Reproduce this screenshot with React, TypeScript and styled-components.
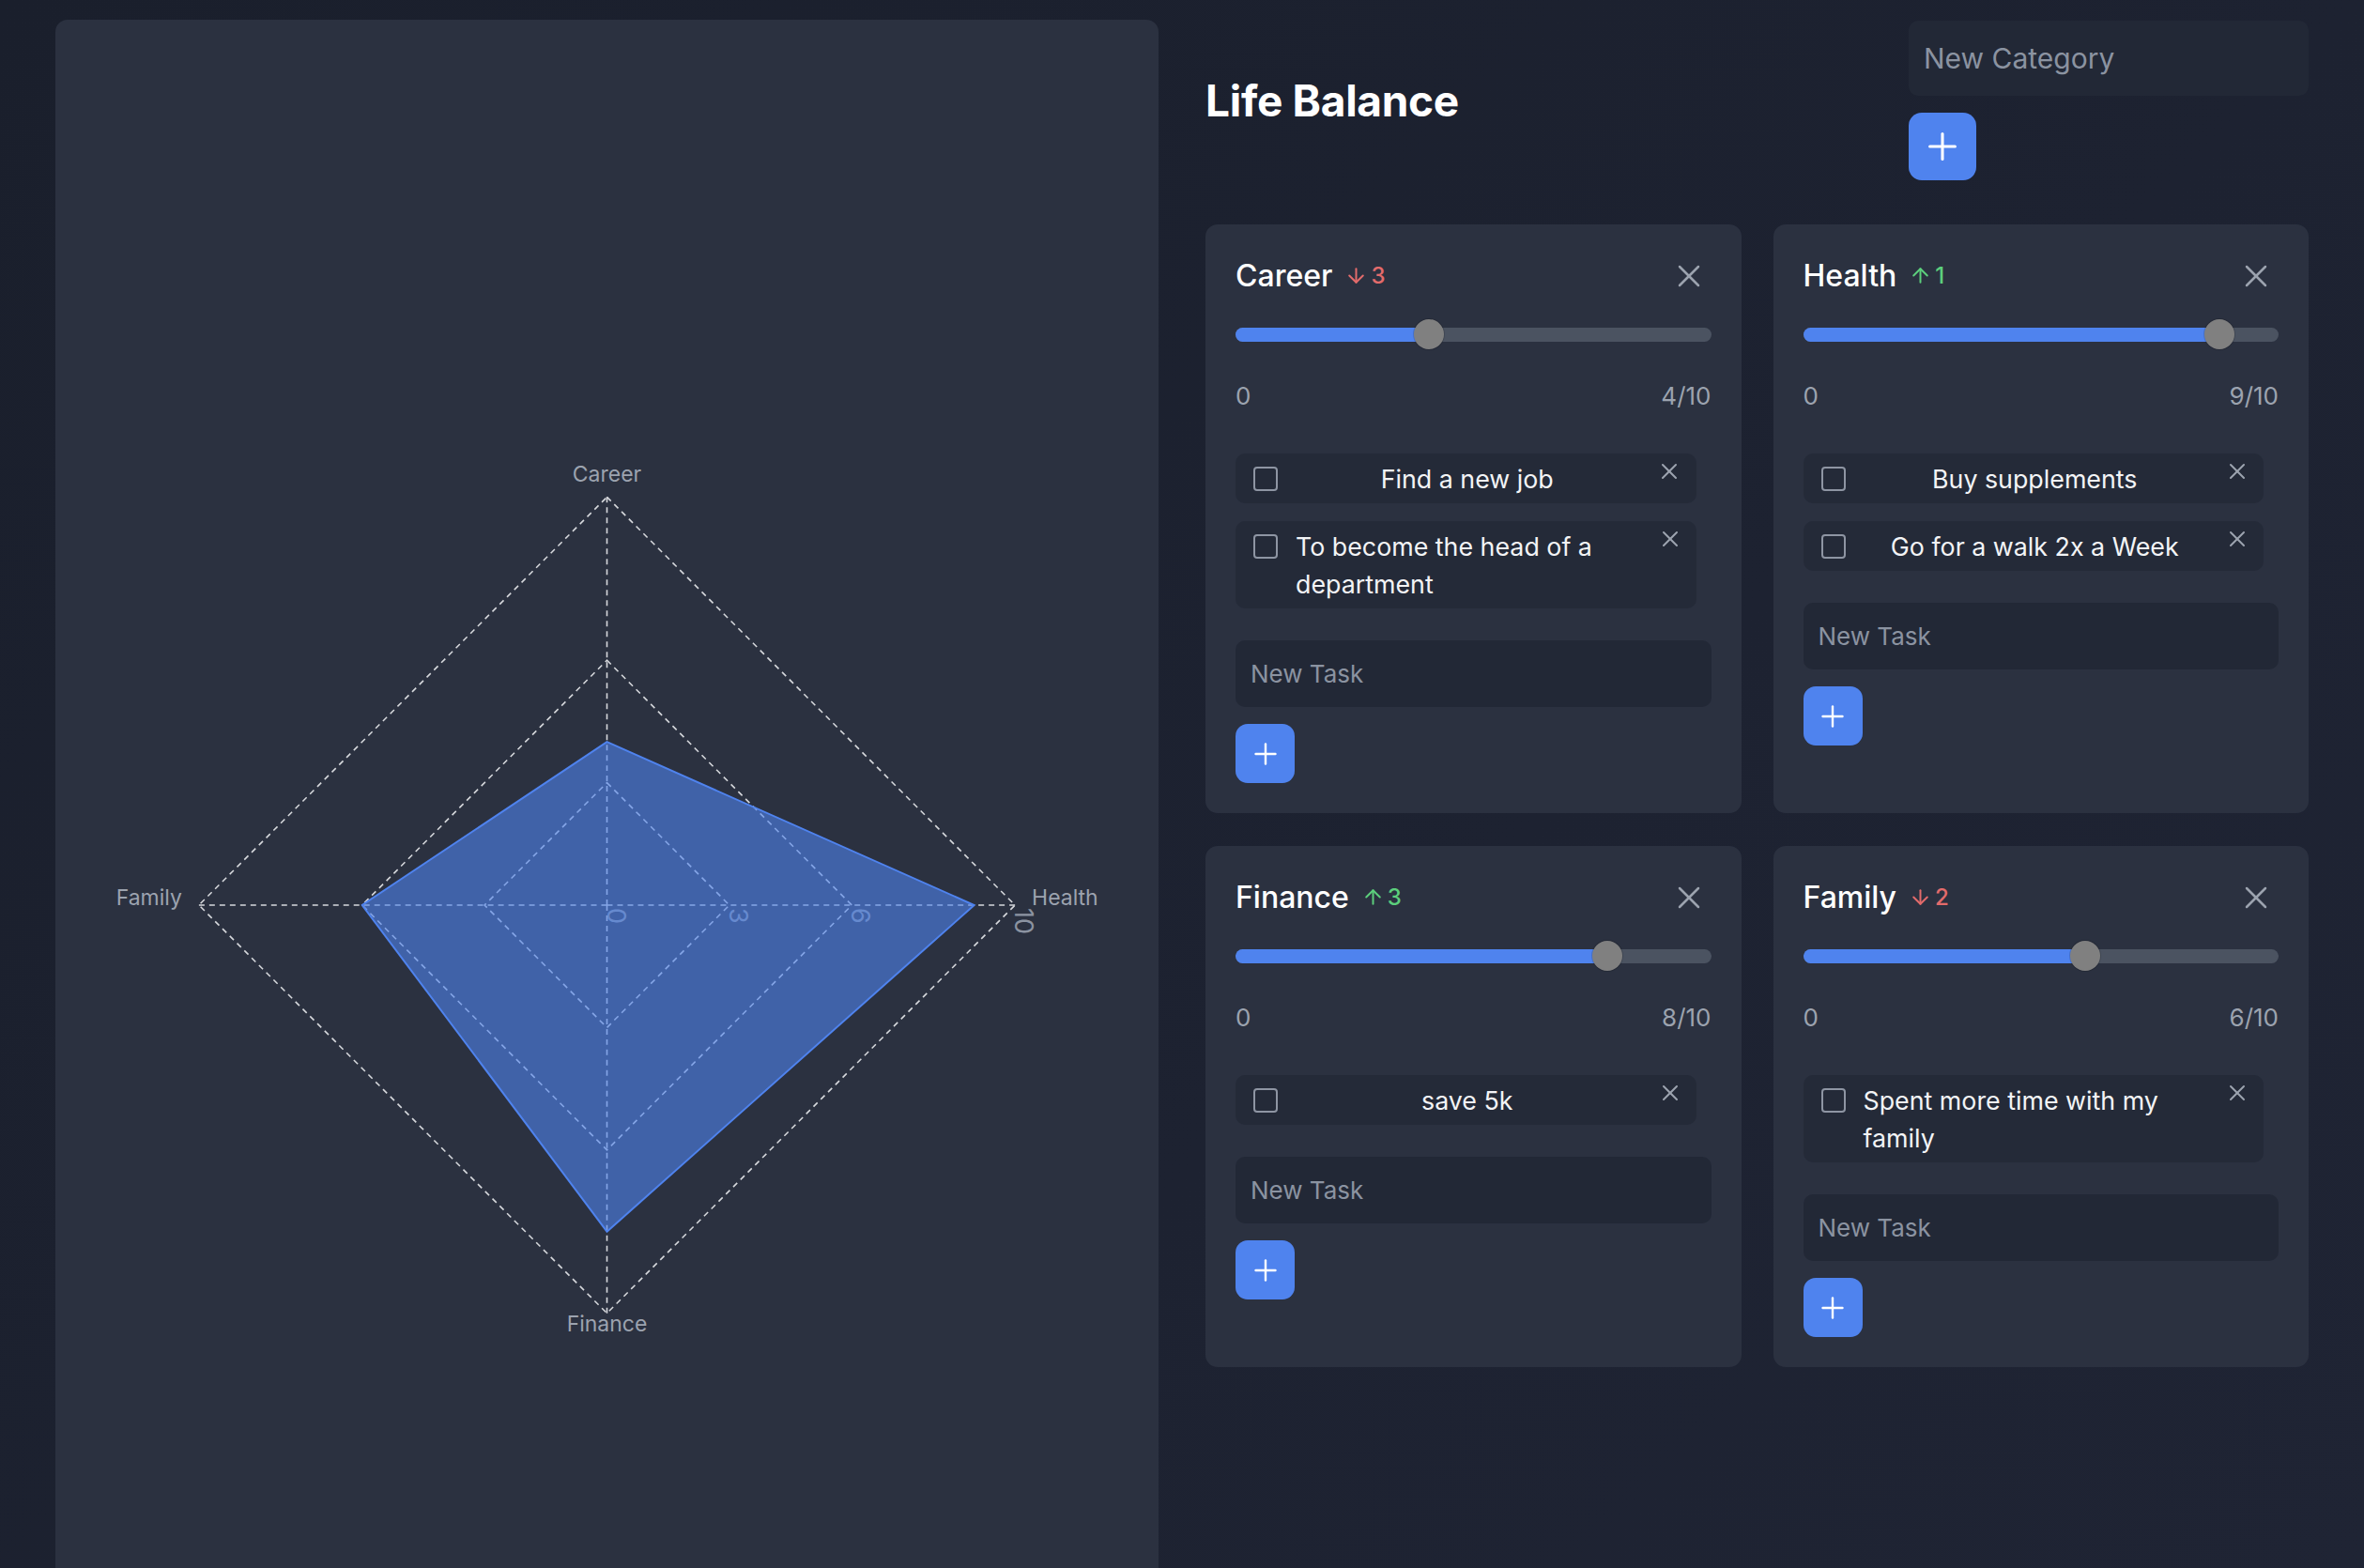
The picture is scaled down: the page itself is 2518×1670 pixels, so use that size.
import React from "react";
import styled, { createGlobalStyle } from "styled-components";
import { ArrowDown, ArrowUp, Plus, X } from "lucide-react";

type Category = {
  name: string;
  value: number;
  trend: number;
  tasks: string[];
};

const categories: Category[] = [
  {
    name: "Career",
    value: 4,
    trend: -3,
    tasks: ["Find a new job", "To become the head of a department"],
  },
  {
    name: "Health",
    value: 9,
    trend: 1,
    tasks: ["Buy supplements", "Go for a walk 2x a Week"],
  },
  { name: "Finance", value: 8, trend: 3, tasks: ["save 5k"] },
  {
    name: "Family",
    value: 6,
    trend: -2,
    tasks: ["Spent more time with my family"],
  },
];

const GlobalStyle = createGlobalStyle`
  html, body {
    margin: 0;
    padding: 0;
    background: #1c2130;
    font-family: Inter, "Noto Sans", "Liberation Sans", sans-serif;
    color: #f3f4f6;
  }
  * {
    box-sizing: border-box;
  }
`;

const Page = styled.div`
  display: grid;
  grid-template-columns: 1fr 1fr;
  gap: 50px;
  height: 100vh;
  padding: 21px 59px 0;
  overflow: hidden;
  background: linear-gradient(135deg, #1a1f2c 0%, #1d2231 60%, #1f2434 100%);
`;

const ChartPanel = styled.section`
  min-height: 1700px;
  background: #2b3140;
  border-radius: 13px;
  padding-top: 443px;
`;

const ChartSvg = styled.svg`
  display: block;
  width: 100%;
  height: 1000px;
`;

const AxisLabel = styled.text`
  fill: #9ca3af;
  font-size: 23px;
  font-family: Inter, "Liberation Sans", sans-serif;
`;

const TickLabel = styled.text`
  fill: #8b93a1;
  font-size: 27px;
  font-family: Inter, "Liberation Sans", sans-serif;
`;

const Main = styled.main`
  display: flex;
  flex-direction: column;
  align-self: start;
`;

const Header = styled.header`
  display: flex;
  align-items: center;
  justify-content: space-between;
  padding-top: 1px;
  margin-bottom: 47px;
`;

const Title = styled.h1`
  margin: 0;
  font-size: 46px;
  font-weight: 700;
  color: #ffffff;
  letter-spacing: -0.3px;
`;

const CategoryForm = styled.div`
  width: 426px;
  display: flex;
  flex-direction: column;
  align-items: flex-start;
  gap: 18px;
`;

const TextInput = styled.input<{ $big?: boolean }>`
  width: 100%;
  height: ${(p) => (p.$big ? "80px" : "71px")};
  padding: 0 16px;
  border: none;
  outline: none;
  border-radius: 10px;
  background: #222836;
  color: #f3f4f6;
  font-family: inherit;
  font-size: ${(p) => (p.$big ? "30px" : "26px")};

  &::placeholder {
    color: #8b93a1;
  }
`;

const AddButton = styled.button<{ $big?: boolean }>`
  width: ${(p) => (p.$big ? "72px" : "63px")};
  height: ${(p) => (p.$big ? "72px" : "63px")};
  display: flex;
  align-items: center;
  justify-content: center;
  padding: 0;
  border: none;
  border-radius: ${(p) => (p.$big ? "14px" : "13px")};
  background: #4f83ee;
  color: #ffffff;
  cursor: pointer;
`;

const CardGrid = styled.div`
  display: grid;
  grid-template-columns: 1fr 1fr;
  gap: 35px 34px;
`;

const Card = styled.div`
  display: flex;
  flex-direction: column;
  padding: 32px;
  background: #2b3140;
  border-radius: 13px;
`;

const CardHeader = styled.div`
  display: flex;
  align-items: center;
  justify-content: space-between;
  height: 45px;
  margin-bottom: 24px;
`;

const TitleGroup = styled.div`
  display: flex;
  align-items: center;
`;

const CardTitle = styled.h2`
  margin: 0;
  font-size: 32px;
  font-weight: 500;
  line-height: 45px;
  color: #ffffff;
`;

const Trend = styled.span<{ $up: boolean }>`
  display: flex;
  align-items: center;
  gap: 3px;
  margin-left: 13px;
  font-size: 24px;
  font-weight: 500;
  color: ${(p) => (p.$up ? "#5ccf7c" : "#e36b6b")};
`;

const IconButton = styled.button<{ $small?: boolean }>`
  display: flex;
  align-items: center;
  justify-content: center;
  flex-shrink: 0;
  width: ${(p) => (p.$small ? "28px" : "48px")};
  height: ${(p) => (p.$small ? "28px" : "45px")};
  margin-top: ${(p) => (p.$small ? "-2px" : "0")};
  padding: 0;
  border: none;
  background: transparent;
  color: #9ca3af;
  cursor: pointer;
`;

const Slider = styled.div`
  position: relative;
  height: 32px;
  display: flex;
  align-items: center;
`;

const Track = styled.div`
  position: relative;
  width: 100%;
  height: 15px;
  border-radius: 8px;
  background: #4b5361;
  overflow: hidden;
`;

const Fill = styled.div`
  height: 100%;
  background: #4f83ee;
`;

const Thumb = styled.div`
  position: absolute;
  top: 0;
  width: 32px;
  height: 32px;
  border-radius: 50%;
  background: #808080;
  box-shadow: 0 0 0 1px rgba(0, 0, 0, 0.15);
`;

const Scale = styled.div`
  display: flex;
  justify-content: space-between;
  margin-top: 31px;
  font-size: 26px;
  line-height: 38px;
  color: #9ca3af;
`;

const TaskList = styled.ul`
  display: flex;
  flex-direction: column;
  gap: 19px;
  margin: 42px 16px 0 0;
  padding: 0;
  list-style: none;
`;

const TaskItem = styled.li`
  display: flex;
  align-items: flex-start;
  justify-content: space-between;
  gap: 19px;
  padding: 6.5px 14px 6.5px 19px;
  background: #242a38;
  border-radius: 10px;
`;

const Checkbox = styled.input`
  appearance: none;
  flex-shrink: 0;
  width: 26px;
  height: 26px;
  margin: 7px 0 0;
  border: 2.5px solid #8e95a3;
  border-radius: 4px;
  background: transparent;
`;

const TaskText = styled.span`
  font-size: 26.8px;
  line-height: 40px;
  color: #f3f4f6;
`;

const NewTaskForm = styled.div`
  display: flex;
  flex-direction: column;
  align-items: flex-start;
  gap: 18px;
  margin-top: 34px;
`;

const CX = 588;
const CY = 500;
const R = 435;

function pt(i: number, n: number, ratio: number): [number, number] {
  const a = -Math.PI / 2 + (i * 2 * Math.PI) / n;
  return [CX + R * ratio * Math.cos(a), CY + R * ratio * Math.sin(a)];
}

function poly(n: number, ratio: (i: number) => number) {
  return Array.from({ length: n }, (_, i) => pt(i, n, ratio(i)).join(",")).join(" ");
}

const labelPlacement = [
  { dx: 0, dy: -16, anchor: "middle" },
  { dx: 18, dy: 0, anchor: "start" },
  { dx: 0, dy: 19, anchor: "middle" },
  { dx: -18, dy: 0, anchor: "end" },
];

const RadarChart: React.FC<{ data: Category[] }> = ({ data }) => {
  const n = data.length;
  return (
    <ChartSvg viewBox="0 0 1176 1000">
      <g stroke="#d6d8dc" strokeWidth={1.6} strokeDasharray="6 5" fill="none">
        {[0.3, 0.6, 1].map((r) => (
          <polygon key={r} points={poly(n, () => r)} />
        ))}
        {data.map((_, i) => {
          const [x, y] = pt(i, n, 1);
          return <line key={i} x1={CX} y1={CY} x2={x} y2={y} />;
        })}
      </g>
      {[0, 3, 6, 10].map((t) => {
        const x = CX + (R * t) / 10;
        return (
          <TickLabel key={t} x={x} y={CY + 3} transform={`rotate(90 ${x} ${CY + 3})`}>
            {t}
          </TickLabel>
        );
      })}
      <polygon
        points={poly(n, (i) => data[i].value / 10)}
        fill="#4f83ee"
        fillOpacity={0.6}
        stroke="#4f83ee"
        strokeWidth={2}
      />
      {data.map((c, i) => {
        const [x, y] = pt(i, n, 1);
        const p = labelPlacement[i % 4];
        return (
          <AxisLabel key={c.name} x={x + p.dx} y={y + p.dy} textAnchor={p.anchor as "middle"}>
            {c.name}
          </AxisLabel>
        );
      })}
    </ChartSvg>
  );
};

const CategoryCard: React.FC<{ category: Category }> = ({ category }) => {
  const ratio = category.value / 10;
  const up = category.trend > 0;
  return (
    <Card>
      <CardHeader>
        <TitleGroup>
          <CardTitle>{category.name}</CardTitle>
          <Trend $up={up}>
            {up ? <ArrowUp size={25} strokeWidth={1.9} /> : <ArrowDown size={25} strokeWidth={1.9} />}
            {Math.abs(category.trend)}
          </Trend>
        </TitleGroup>
        <IconButton aria-label="Delete category">
          <X size={40} strokeWidth={1.5} />
        </IconButton>
      </CardHeader>
      <Slider>
        <Track>
          <Fill style={{ width: `calc(16px + (100% - 32px) * ${ratio})` }} />
        </Track>
        <Thumb style={{ left: `calc((100% - 32px) * ${ratio})` }} />
      </Slider>
      <Scale>
        <span>0</span>
        <span>{category.value}/10</span>
      </Scale>
      <TaskList>
        {category.tasks.map((t) => (
          <TaskItem key={t}>
            <Checkbox type="checkbox" />
            <TaskText>{t}</TaskText>
            <IconButton $small aria-label="Delete task">
              <X size={28} strokeWidth={1.7} />
            </IconButton>
          </TaskItem>
        ))}
      </TaskList>
      <NewTaskForm>
        <TextInput placeholder="New Task" />
        <AddButton aria-label="Add task">
          <Plus size={36} strokeWidth={1.6} />
        </AddButton>
      </NewTaskForm>
    </Card>
  );
};

const App: React.FC = () => {
  return (
    <>
      <GlobalStyle />
      <Page>
        <ChartPanel>
          <RadarChart data={categories} />
        </ChartPanel>
        <Main>
          <Header>
            <Title>Life Balance</Title>
            <CategoryForm>
              <TextInput $big placeholder="New Category" />
              <AddButton $big aria-label="Add category">
                <Plus size={46} strokeWidth={1.6} />
              </AddButton>
            </CategoryForm>
          </Header>
          <CardGrid>
            {categories.map((c) => (
              <CategoryCard key={c.name} category={c} />
            ))}
          </CardGrid>
        </Main>
      </Page>
    </>
  );
};

export default App;
